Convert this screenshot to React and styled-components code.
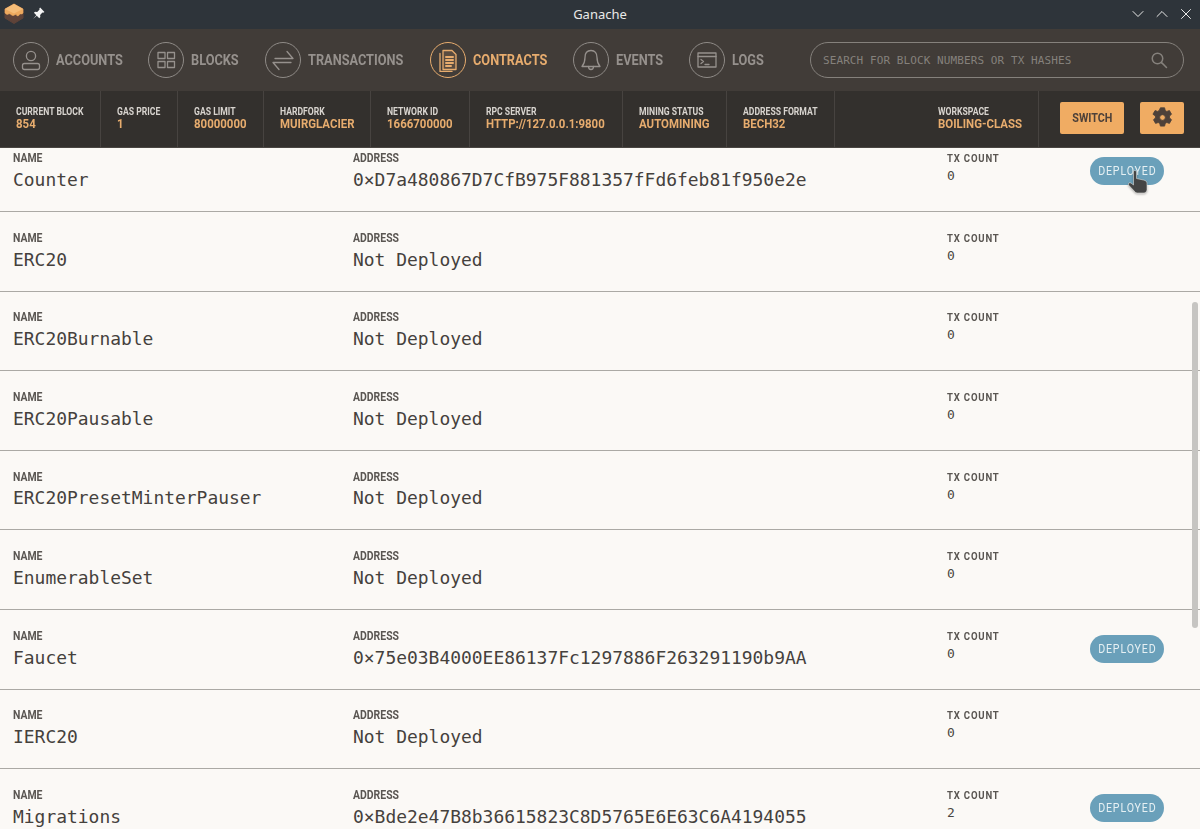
import React from 'react';
import styled, { createGlobalStyle } from 'styled-components';

const GlobalStyle = createGlobalStyle`
    html, body {
        margin: 0;
        height: 100%;
        overflow: hidden;
        background: #FBF9F6;
        font-family: Roboto, "Liberation Sans", sans-serif;
    }
    * { box-sizing: border-box; }
`

const Page = styled.div`
    width: 1200px;
    height: 829px;
    display: flex;
    flex-direction: column;
    overflow: hidden;
`

const TitleBar = styled.div`
    height: 29px;
    flex: none;
    background: #2E343A;
    color: #E9E9E8;
    display: grid;
    grid-template-columns: 1fr auto 1fr;
    align-items: center;
    padding: 0 8px 2px;
    font-family: "Noto Sans", sans-serif;
    font-size: 13px;
`

const TitleLeft = styled.div`
    display: flex;
    align-items: center;
    gap: 8px;
    margin-left: -4px;
`

const TitleControls = styled.div`
    display: flex;
    justify-content: flex-end;
    gap: 12px;
`

const Nav = styled.nav`
    height: 62px;
    flex: none;
    background: #413C38;
    display: flex;
    align-items: center;
    padding: 0 16px 0 13px;
`

const NavItem = styled.div`
    width: ${p => p.$width}px;
    flex: none;
    display: flex;
    align-items: center;
    gap: 7px;
    color: ${p => p.$active ? '#E7AC6E' : '#96918D'};
`

const NavCircle = styled.div`
    width: 36px;
    height: 36px;
    flex: none;
    border-radius: 50%;
    border: 1.5px solid ${p => p.$active ? '#E7AC6E' : '#8F8B87'};
    display: flex;
    align-items: center;
    justify-content: center;
`

const NavLabel = styled.span`
    display: inline-block;
    font-size: 15px;
    font-weight: 700;
    white-space: nowrap;
    transform: scaleX(.85);
    transform-origin: 0 50%;
`

const Search = styled.div`
    width: 374px;
    height: 36px;
    margin-left: auto;
    border: 1px solid #85817C;
    border-radius: 18px;
    display: flex;
    align-items: center;
    justify-content: space-between;
    padding: 0 15px 0 12px;
    color: #85817C;
    font-family: "DejaVu Sans Mono", monospace;
    font-size: 11px;
    letter-spacing: .09px;
`

const StatusBar = styled.div`
    height: 57px;
    flex: none;
    background: #33302D;
    border-bottom: 1px solid #4A4642;
    display: flex;
    align-items: stretch;
`

const Stat = styled.div`
    width: ${p => p.$width}px;
    flex: none;
    padding: 14px 0 0 16px;
    border-right: 1px solid #474340;
    overflow: hidden;
`

const StatLabel = styled.div`
    color: #D8D4CF;
    font-size: 11.5px;
    font-weight: 700;
    line-height: 13px;
    white-space: nowrap;
    transform: scaleX(.75);
    transform-origin: 0 50%;
`

const StatValue = styled.div`
    color: #E7AC6E;
    font-size: 13px;
    font-weight: 700;
    line-height: 13px;
    margin-top: -1px;
    white-space: nowrap;
    transform: scaleX(.88);
    transform-origin: 0 50%;
`

const WorkspaceStat = styled(Stat)`
    flex: 1;
    padding-left: 103px;
`

const StatusActions = styled.div`
    flex: none;
    width: 161px;
    padding: 11px 16px 0 21px;
    display: flex;
    gap: 16px;
    align-items: flex-start;
`

const ActionButton = styled.div`
    width: ${p => p.$width}px;
    height: 32px;
    padding-bottom: 1px;
    background: #F0AC63;
    border-radius: 2px;
    color: #4E4139;
    display: flex;
    align-items: center;
    justify-content: center;
`

const SwitchText = styled.span`
    display: inline-block;
    font-size: 12.5px;
    font-weight: 700;
    transform: scaleX(.86);
`

const ListPane = styled.main`
    flex: 1;
    position: relative;
    overflow: hidden;
    background: #FBF9F6;
`

const List = styled.div`
    margin-top: -15.6px;
`

const Row = styled.div`
    height: 79.6px;
    border-bottom: 1px solid #ABA9A5;
    display: grid;
    grid-template-columns: 340px 594px 143px 1fr;
    padding: 19.8px 0 0 13px;
    position: relative;
`

const Label = styled.div`
    color: #5A5652;
    font-size: 12px;
    font-weight: 700;
    line-height: 13px;
    white-space: nowrap;
    transform: scaleX(.87);
    transform-origin: 0 50%;
`

const TxLabel = styled(Label)`
    letter-spacing: 1px;
    font-size: 11.5px;
    transform: scaleX(.83);
`

const Value = styled.div`
    color: #45413D;
    font-family: "DejaVu Sans Mono", monospace;
    font-size: 17.94px;
    line-height: 22px;
    margin-top: 3.8px;
    white-space: nowrap;
`

const TxValue = styled.div`
    color: #4A4642;
    font-family: "DejaVu Sans Mono", monospace;
    font-size: 13px;
    line-height: 16px;
    margin-top: 3px;
`

const Badge = styled.div`
    width: 74px;
    height: 28px;
    margin-top: 5.2px;
    padding-bottom: 1px;
    border-radius: 14px;
    background: #6AA0BA;
    color: #E6F0F3;
    display: flex;
    align-items: center;
    justify-content: center;
`

const BadgeText = styled.span`
    display: inline-block;
    font-size: 12.5px;
    letter-spacing: 1px;
    transform: scaleX(.85);
    white-space: nowrap;
`

const ScrollThumb = styled.div`
    position: absolute;
    top: 154px;
    right: 2px;
    width: 6px;
    height: 326px;
    border-radius: 3px;
    background: #C6C5C2;
`

const Cursor = styled.svg`
    position: absolute;
    left: 1127px;
    top: 22px;
    filter: drop-shadow(0 1px 1px rgba(0, 0, 0, .3));
`

const Stroke = ({ children, size = 24, color = 'currentColor', width = 1.3 }) => (
    <svg width={size} height={size} viewBox="0 0 24 24" fill="none" stroke={color} strokeWidth={width} strokeLinecap="round" strokeLinejoin="round">
        {children}
    </svg>
)

const icons = {
    accounts: <><circle cx="12" cy="8" r="4.6" /><rect x="3.5" y="15.5" width="17" height="6" rx="2" /></>,
    blocks: <><rect x="4" y="4.5" width="7" height="6" /><rect x="13.5" y="4.5" width="7" height="6" /><rect x="4" y="13.5" width="7" height="6" /><rect x="13.5" y="13.5" width="7" height="6" /></>,
    transactions: <><path d="M4 10.500h18L16 3.500M20 14.500H2l6 7" /></>,
    contracts: <><path d="M7 2.500h9l4 4v15H7z" fill="#5A4C40" /><path d="M4 5.500v18h12" /><path d="M10 9h7M10 12h7M10 15h7M10 18h5" strokeWidth="2" /></>,
    events: <><path d="M12 2.500c-4 0-6 3-6 7 0 5-1 6.500-3 9h18c-2-2.500-3-4-3-9 0-4-2-7-6-7z" /><path d="M9.500 18.500c0 4 5 4 5 0" /></>,
    logs: <><rect x="3" y="5" width="18" height="14" /><path d="M3 8.500h18M6 11.500l2.500 2-2.500 2M10 16.500h4" /></>,
}

const navItems = [
    { key: 'accounts', label: 'ACCOUNTS', width: 135 },
    { key: 'blocks', label: 'BLOCKS', width: 117 },
    { key: 'transactions', label: 'TRANSACTIONS', width: 165 },
    { key: 'contracts', label: 'CONTRACTS', width: 143, active: true },
    { key: 'events', label: 'EVENTS', width: 116 },
    { key: 'logs', label: 'LOGS', width: 80 },
]

const stats = [
    { label: 'CURRENT BLOCK', value: '854', width: 101 },
    { label: 'GAS PRICE', value: '1', width: 77 },
    { label: 'GAS LIMIT', value: '80000000', width: 86 },
    { label: 'HARDFORK', value: 'MUIRGLACIER', width: 107 },
    { label: 'NETWORK ID', value: '1666700000', width: 99 },
    { label: 'RPC SERVER', value: 'HTTP://127.0.0.1:9800', width: 153 },
    { label: 'MINING STATUS', value: 'AUTOMINING', width: 104 },
    { label: 'ADDRESS FORMAT', value: 'BECH32', width: 108 },
]

const contracts = [
    { name: 'Counter', address: '0×D7a480867D7CfB975F881357fFd6feb81f950e2e', tx: 0 },
    { name: 'ERC20', tx: 0 },
    { name: 'ERC20Burnable', tx: 0 },
    { name: 'ERC20Pausable', tx: 0 },
    { name: 'ERC20PresetMinterPauser', tx: 0 },
    { name: 'EnumerableSet', tx: 0 },
    { name: 'Faucet', address: '0×75e03B4000EE86137Fc1297886F263291190b9AA', tx: 0 },
    { name: 'IERC20', tx: 0 },
    { name: 'Migrations', address: '0×Bde2e47B8b36615823C8D5765E6E63C6A4194055', tx: 2 },
]

const Logo = () => (
    <svg width="20" height="21" viewBox="0 0 20 21">
        <path d="M1 6l9-5 9 5v9l-9 5.500-9-5.500z" fill="#5E4339" stroke="#5E4339" strokeLinejoin="round" />
        <path d="M1 6l9-5 9 5v4c-1 2-2.500 0-3.500 1.500s-2 2-3 .5-2.500 1-4 .5S6 10 4.500 11 2 11 1 10z" fill="#EDA95E" stroke="#EDA95E" strokeWidth=".6" strokeLinejoin="round" />
        <path d="M1 6l9-5 9 5-9 4.500z" fill="#F4BC78" />
    </svg>
)

const Pin = () => (
    <svg width="13" height="13" viewBox="0 0 12 12" fill="#F4F4F4">
        <path d="M7.500.5l4 4-1.200.8-.7-.3-2.100 2.300.2 2-1 1-2.300-2.300L1 11l3-3.500L1.800 5.300l1-1 2 .2L7 2.400l-.3-.7z" />
    </svg>
)

const Gear = () => (
    <svg width="21" height="21" viewBox="0 0 20 20">
        <path fillRule="evenodd" fill="#4E4139" stroke="#4E4139" strokeWidth=".8" strokeLinejoin="round" d="M8 .8h4l.6 2.500 1.500.9 2.500-.8 2 3.500-1.900 1.700v1.800l1.900 1.700-2 3.500-2.500-.8-1.500.9-.6 2.500H8l-.6-2.500-1.500-.9-2.500.8-2-3.500 1.900-1.700V8.600L.9 6.900l2-3.500 2.500.8 1.500-.9zM10 7.300a2.700 2.700 0 1 0 0 5.400 2.700 2.700 0 0 0 0-5.400z" />
    </svg>
)

const App = () => (
    <Page>
        <GlobalStyle />
        <TitleBar>
            <TitleLeft><Logo /><Pin /></TitleLeft>
            <span>Ganache</span>
            <TitleControls>
                <Stroke size={12} width={2}><path d="M2 7l10 10L22 7" /></Stroke>
                <Stroke size={12} width={2}><path d="M2 17L12 7l10 10" /></Stroke>
                <Stroke size={12} width={2}><path d="M3 3l18 18M21 3L3 21" /></Stroke>
            </TitleControls>
        </TitleBar>
        <Nav>
            {navItems.map(item => (
                <NavItem key={item.key} $width={item.width} $active={item.active}>
                    <NavCircle $active={item.active}><Stroke>{icons[item.key]}</Stroke></NavCircle>
                    <NavLabel>{item.label}</NavLabel>
                </NavItem>
            ))}
            <Search>
                <span>SEARCH FOR BLOCK NUMBERS OR TX HASHES</span>
                <Stroke size={18} color="#85817C" width={2}><circle cx="10" cy="10" r="7" /><path d="M15.500 15.500L22 22" /></Stroke>
            </Search>
        </Nav>
        <StatusBar>
            {stats.map(stat => (
                <Stat key={stat.label} $width={stat.width}>
                    <StatLabel>{stat.label}</StatLabel>
                    <StatValue>{stat.value}</StatValue>
                </Stat>
            ))}
            <WorkspaceStat>
                <StatLabel>WORKSPACE</StatLabel>
                <StatValue>BOILING-CLASS</StatValue>
            </WorkspaceStat>
            <StatusActions>
                <ActionButton $width={64}><SwitchText>SWITCH</SwitchText></ActionButton>
                <ActionButton $width={44}><Gear /></ActionButton>
            </StatusActions>
        </StatusBar>
        <ListPane>
            <List>
                {contracts.map(contract => (
                    <Row key={contract.name}>
                        <div>
                            <Label>NAME</Label>
                            <Value>{contract.name}</Value>
                        </div>
                        <div>
                            <Label>ADDRESS</Label>
                            <Value>{contract.address || 'Not Deployed'}</Value>
                        </div>
                        <div>
                            <TxLabel>TX COUNT</TxLabel>
                            <TxValue>{contract.tx}</TxValue>
                        </div>
                        {contract.address && <Badge><BadgeText>DEPLOYED</BadgeText></Badge>}
                    </Row>
                ))}
            </List>
            <ScrollThumb />
            <Cursor width="21" height="24" viewBox="0 0 20 24">
                <path fill="#444" stroke="#FAF8F5" strokeWidth=".5" d="M6 1c1-1 3-.6 3 1v6.500l7 1.500c2.500.6 3.500 1.500 3.500 3.500v6c0 2-1.500 3.500-3 3.500H10c-1.500 0-2.500-.7-3.300-2L1 15c-.8-1.500 1-3 2.500-2L6 15z" />
            </Cursor>
        </ListPane>
    </Page>
)

export default App
